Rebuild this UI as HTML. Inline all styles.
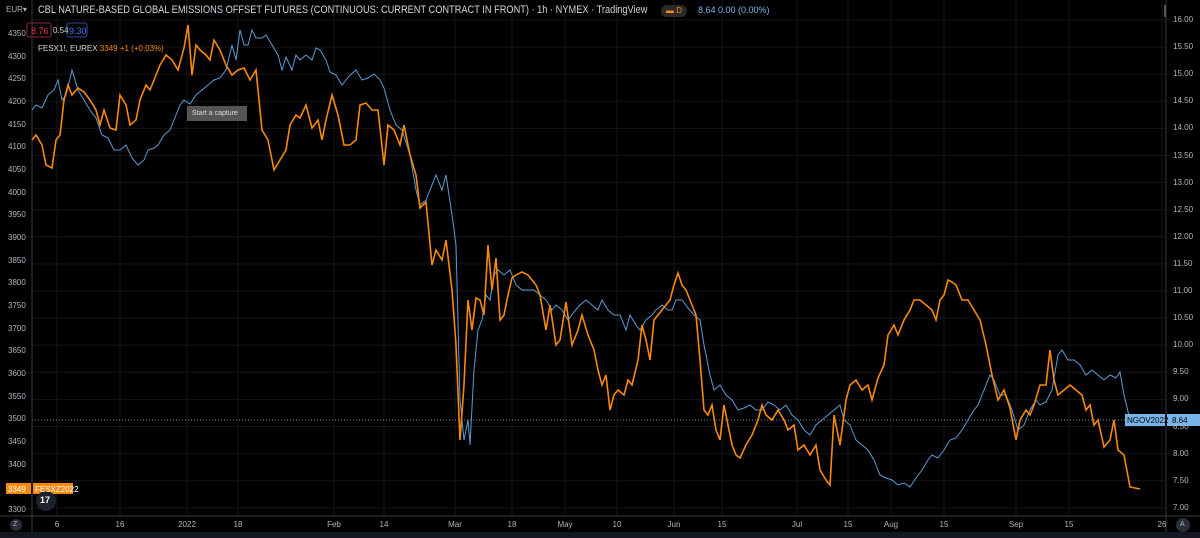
<!DOCTYPE html><html><head><style>
body{margin:0;background:#000;width:1200px;height:538px;overflow:hidden;font-family:"Liberation Sans",sans-serif;position:relative}
.t{position:absolute;font-size:8px;color:#b2b5be;white-space:nowrap}
</style></head><body>
<svg width="1200" height="538" style="position:absolute;left:0;top:0">
<g stroke="#161616" stroke-width="1">
<line x1="57" y1="0" x2="57" y2="516"/><line x1="120" y1="0" x2="120" y2="516"/><line x1="187" y1="0" x2="187" y2="516"/><line x1="238" y1="0" x2="238" y2="516"/><line x1="334" y1="0" x2="334" y2="516"/><line x1="384" y1="0" x2="384" y2="516"/><line x1="455" y1="0" x2="455" y2="516"/><line x1="512" y1="0" x2="512" y2="516"/><line x1="565" y1="0" x2="565" y2="516"/><line x1="617" y1="0" x2="617" y2="516"/><line x1="674" y1="0" x2="674" y2="516"/><line x1="722" y1="0" x2="722" y2="516"/><line x1="797" y1="0" x2="797" y2="516"/><line x1="848" y1="0" x2="848" y2="516"/><line x1="891" y1="0" x2="891" y2="516"/><line x1="944" y1="0" x2="944" y2="516"/><line x1="1016" y1="0" x2="1016" y2="516"/><line x1="1069" y1="0" x2="1069" y2="516"/><line x1="1162" y1="0" x2="1162" y2="516"/>
</g>
<g id="h" stroke="#161616"></g>
<line x1="32" y1="0" x2="32" y2="532" stroke="#363a45"/>
<line x1="1166" y1="0" x2="1166" y2="532" stroke="#363a45"/>
<line x1="0" y1="516" x2="1200" y2="516" stroke="#363a45"/>
<rect x="0" y="532" width="1200" height="6" fill="#131722"/>
<line x1="32" y1="420" x2="1166" y2="420" stroke="#6a8fb0" stroke-dasharray="1,2"/>
<polyline fill="none" stroke="#5b9bd5" stroke-width="1" points="32,110 36,105 42,108 48,95 54,90 58,80 62,100 66,95 72,70 78,90 84,100 90,110 96,118 102,135 108,138 114,150 120,150 126,145 132,158 138,165 144,160 148,150 154,148 158,145 164,135 170,130 176,115 180,105 184,100 190,104 196,95 202,90 208,85 214,80 220,78 226,70 232,45 236,60 240,30 244,45 248,45 252,30 256,38 262,38 266,35 272,45 278,55 282,70 286,57 292,70 296,55 300,60 306,55 312,60 316,48 320,50 326,60 330,72 336,75 342,85 346,80 350,75 356,70 362,80 368,78 374,74 380,80 384,88 390,110 396,125 402,130 410,155 416,190 420,205 426,200 432,185 436,175 442,190 446,175 452,215 456,245 460,400 464,440 468,420 470,445 474,370 478,330 482,320 486,295 490,300 494,275 498,270 504,275 510,270 516,285 522,290 528,290 534,290 540,295 546,300 552,310 556,305 562,310 568,320 574,312 580,305 586,300 592,305 598,310 602,300 608,310 614,315 620,315 626,330 630,315 636,325 640,330 646,320 652,315 656,310 662,305 668,310 672,310 676,300 682,300 688,308 694,315 700,320 704,345 710,375 714,390 720,385 726,395 732,400 738,410 744,408 750,405 756,410 762,410 768,402 774,405 780,410 786,405 792,415 798,420 804,430 810,435 816,425 822,420 828,415 834,410 840,405 844,420 850,425 856,440 862,445 868,450 874,460 880,475 886,478 892,480 898,485 904,483 910,487 916,478 922,470 928,460 932,455 938,458 944,450 950,440 956,438 962,430 968,420 974,410 978,405 984,390 990,375 994,380 1000,395 1006,395 1012,410 1018,430 1024,425 1030,410 1036,400 1040,405 1046,402 1052,390 1058,355 1062,350 1068,360 1074,360 1080,365 1086,375 1092,370 1098,375 1104,380 1110,375 1116,378 1120,372 1124,395 1130,420"/>
<polyline fill="none" stroke="#f7890c" stroke-width="1.6" points="32,140 36,135 42,145 46,165 52,168 56,140 60,135 64,100 68,85 72,95 78,88 84,92 90,100 96,110 100,125 104,110 110,128 116,130 120,95 126,105 130,125 136,120 140,100 146,85 150,90 156,75 160,65 166,55 172,60 178,70 184,48 188,25 192,75 196,45 200,50 206,55 210,60 214,40 220,50 226,65 232,75 238,70 244,68 250,80 256,70 262,130 268,140 274,170 280,160 286,150 290,125 296,115 300,118 306,105 312,128 318,120 322,140 326,120 332,95 338,115 344,145 350,145 356,140 360,105 366,103 372,110 378,110 384,165 388,125 394,130 400,145 404,125 410,155 416,175 420,208 426,202 432,265 436,250 442,260 446,240 452,290 456,345 460,440 464,385 468,300 472,330 476,298 480,300 484,315 488,245 492,290 496,258 500,320 504,315 508,295 512,278 516,275 522,272 528,275 536,285 540,295 546,330 550,305 556,345 560,340 566,302 572,345 578,330 582,315 588,335 594,350 598,370 602,385 606,375 610,410 614,395 618,390 624,395 628,380 632,385 638,360 642,325 646,340 650,360 654,320 658,315 662,310 666,305 670,300 674,285 678,273 682,285 686,290 692,305 696,315 700,360 704,410 708,415 712,405 716,430 720,440 724,405 728,425 732,445 736,455 740,458 746,445 752,435 758,420 762,405 766,415 772,420 778,410 784,420 788,430 794,425 798,450 804,445 810,455 816,445 820,470 826,480 830,485 834,415 840,445 846,400 850,385 856,380 862,390 868,385 872,400 878,378 884,365 888,335 894,325 898,335 904,320 910,310 914,300 920,300 926,305 932,310 936,320 940,300 944,295 948,280 952,282 956,285 962,300 968,300 974,310 980,320 986,345 992,375 998,400 1004,390 1010,408 1016,440 1020,420 1026,410 1030,415 1034,405 1040,385 1046,385 1050,350 1054,380 1058,395 1064,390 1070,385 1076,390 1082,395 1086,410 1090,405 1094,425 1098,420 1104,447 1110,440 1114,420 1118,450 1124,455 1130,487 1140,489"/>
<rect x="6" y="483" width="25" height="11" fill="#f7890c"/>
<rect x="33" y="483" width="40" height="11" fill="#f7890c"/>
<rect x="1125" y="414" width="40" height="12" fill="#78b5ea"/>
<rect x="1167" y="414" width="33" height="12" fill="#78b5ea"/>
<circle cx="46" cy="501" r="10" fill="#1e222d"/>
<circle cx="16" cy="525" r="6" fill="#2a2e39"/>
<circle cx="1183" cy="525" r="7" fill="#2a2e39"/>
<rect x="187" y="106" width="60" height="15" fill="#555"/>
<rect x="1164" y="5" width="2" height="12" fill="#555"/>
<rect x="661" y="5" width="26" height="12" rx="6" fill="#2a2a2a"/>
<rect x="27" y="23" width="24" height="14" rx="2" fill="none" stroke="#8a2a3a"/>
<rect x="67" y="23" width="20" height="14" rx="2" fill="none" stroke="#2a4aa0"/>
</svg>
<div class="t" style="left:6px;top:5px">EUR▾</div>
<div class="t" style="left:38px;top:4px;font-size:11px;color:#d1d4dc;transform:scaleX(0.84);transform-origin:0 0">CBL NATURE-BASED GLOBAL EMISSIONS OFFSET FUTURES (CONTINUOUS: CURRENT CONTRACT IN FRONT) · 1h · NYMEX · TradingView</div>
<div class="t" style="left:666px;top:6px;color:#f7890c">▬ D</div>
<div class="t" style="left:698px;top:5px;font-size:9px;color:#78b5ea">8.64 0.00 (0.00%)</div>
<div class="t" style="left:31px;top:26px;font-size:9px;color:#f23645">8.76</div>
<div class="t" style="left:53px;top:26px;font-size:8px;color:#d1d4dc">0.54</div>
<div class="t" style="left:69px;top:26px;font-size:9px;color:#4a7aff">9.30</div>
<div class="t" style="left:38px;top:44px;font-size:8px;color:#d1d4dc">FESX1!, EUREX <span style="color:#f7890c">3349 +1 (+0.03%)</span></div>
<div class="t" style="left:192px;top:110px;font-size:7px;color:#ddd">Start a capture</div>
<div class="t" style="left:40px;top:495px;font-size:9px;color:#fff;font-weight:bold">17</div>
<div class="t" style="left:8px;top:485px;color:#fff">3349</div>
<div class="t" style="left:35px;top:485px;color:#fff">FESXZ2022</div>
<div class="t" style="left:1127px;top:416px;color:#000">NGOV2022</div>
<div class="t" style="left:1172px;top:416px;color:#000">8.64</div>
<div class="t" style="left:13px;top:521px;font-size:7px">Z</div>
<div class="t" style="left:1180px;top:521px;font-size:7px">A</div>
<div id="L"></div>
<script>
var s='';
var l=[4350,4300,4250,4200,4150,4100,4050,4000,3950,3900,3850,3800,3750,3700,3650,3600,3550,3500,3450,3400,3300];
l.forEach(function(v){var y=510-(v-3300)*0.4533;s+='<div class="t" style="left:8px;top:'+(y-5)+'px">'+v+'</div>';});
for(var v=16;v>=7;v-=0.5){var y=20+(16-v)*54.2;s+='<div class="t" style="left:1173px;top:'+(y-5)+'px">'+v.toFixed(2)+'</div>';}
[[57,'6'],[120,'16'],[187,'2022'],[238,'18'],[334,'Feb'],[384,'14'],[455,'Mar'],[512,'18'],[565,'May'],[617,'10'],[674,'Jun'],[722,'15'],[797,'Jul'],[848,'15'],[891,'Aug'],[944,'15'],[1016,'Sep'],[1069,'15'],[1162,'26']].forEach(function(a){s+='<div class="t" style="left:'+(a[0]-10)+'px;width:20px;text-align:center;top:520px">'+a[1]+'</div>';});
document.getElementById('L').innerHTML=s;
var h='';for(var v=16;v>=7;v-=0.5){var y=20+(16-v)*54.2;h+='<line x1="32" x2="1166" y1="'+y+'" y2="'+y+'"/>';}
document.getElementById('h').innerHTML=h;
</script>
</body></html>
